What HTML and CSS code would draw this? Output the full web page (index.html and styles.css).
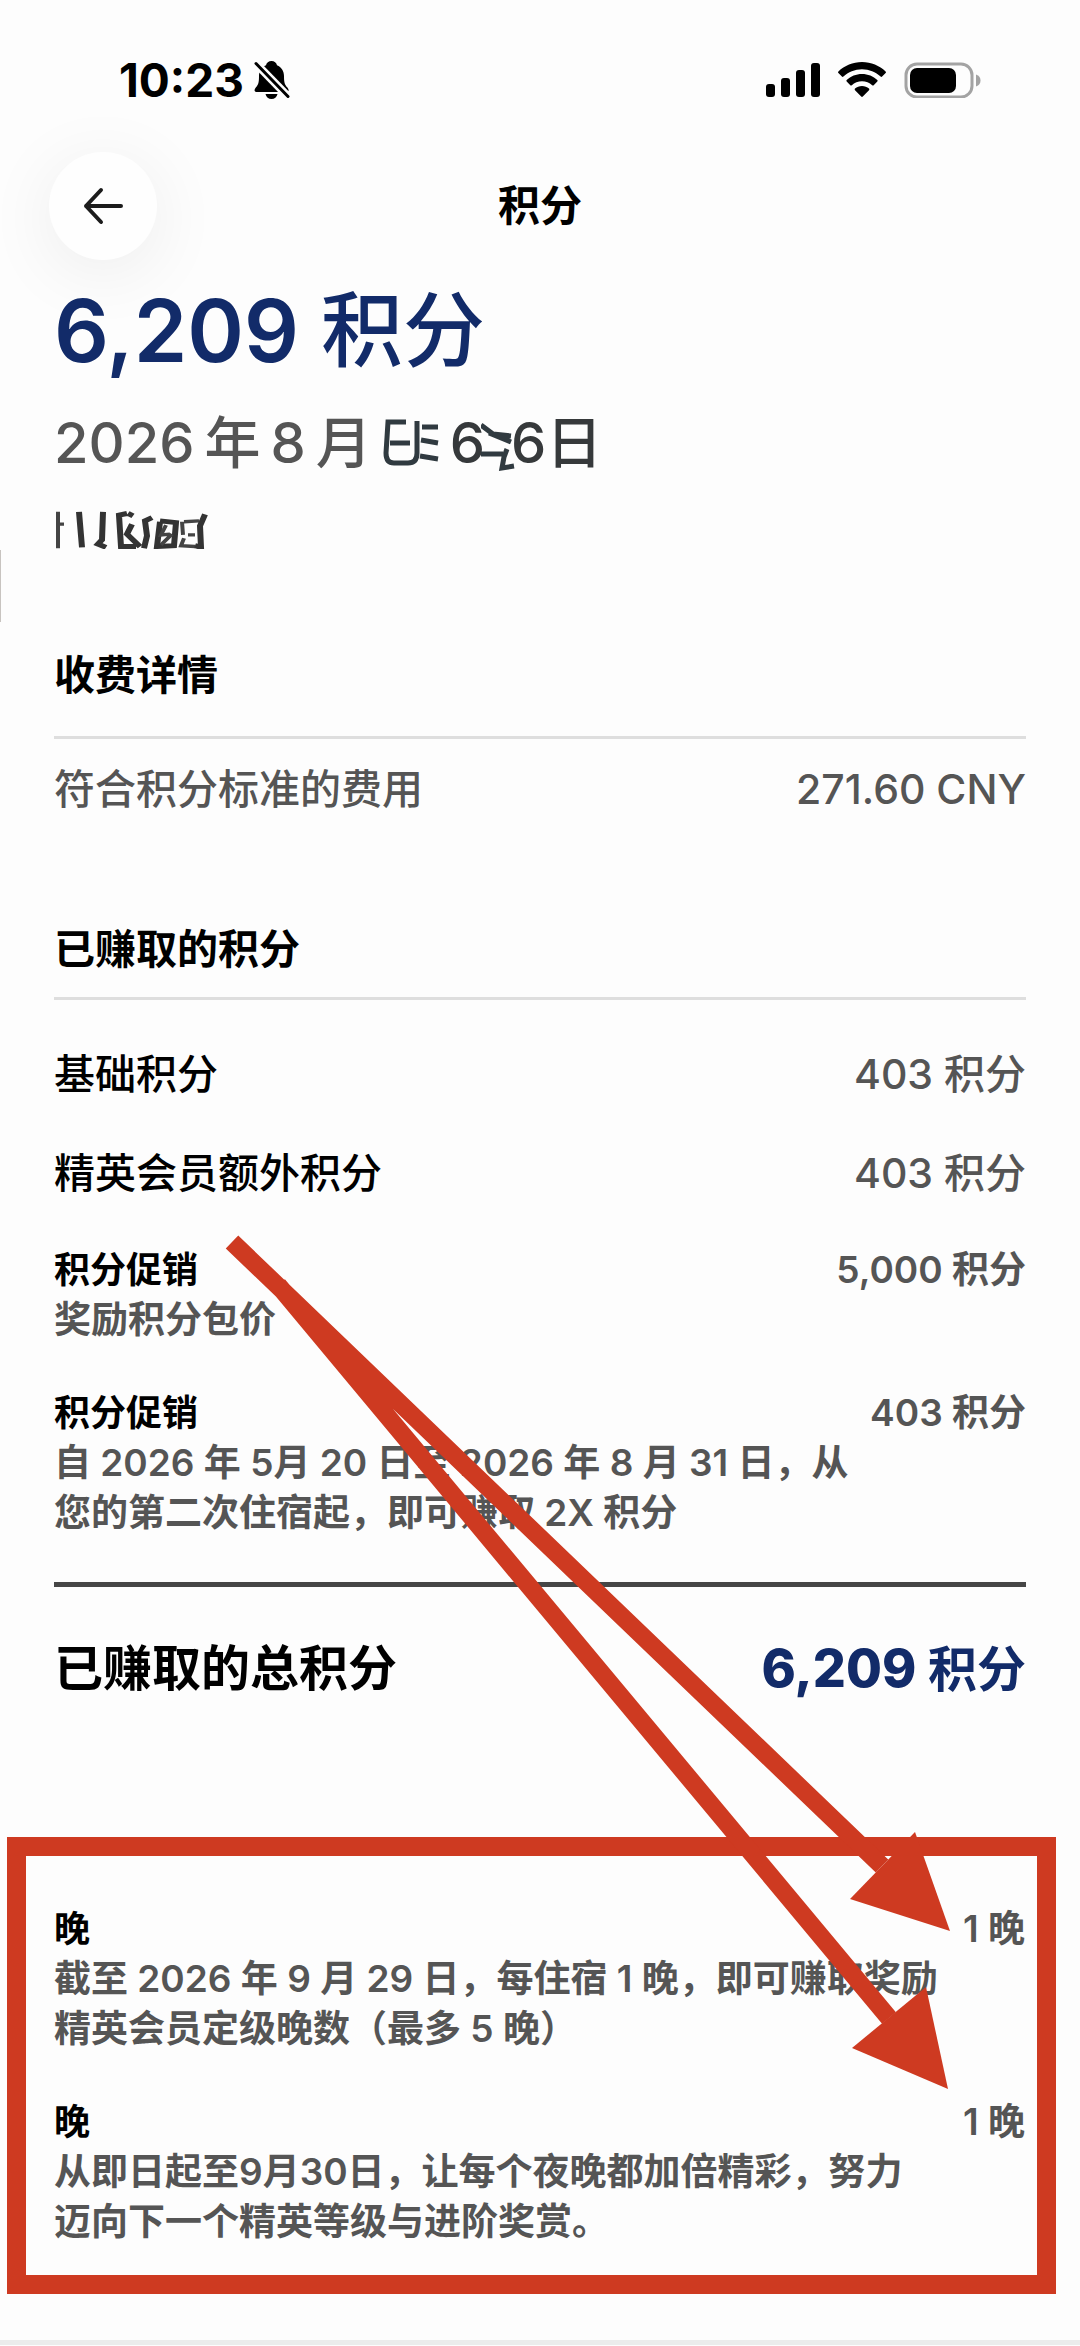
FILE: index.html
```
<!DOCTYPE html>
<html lang="zh-CN">
<head>
  <meta charset="utf-8">
  <meta name="viewport" content="width=device-width, initial-scale=1">
  <title>积分</title>
  <link rel="stylesheet" href="styles.css">
</head>
<body>
  <div class="page">
    <div class="status-bar">
      <div class="status-left">
        <span class="time">10:23</span>
        <svg class="bell" width="36" height="40" viewBox="0 0 36 40">
          <path d="M17.500 1c-2.800 0-5 1.700-5.500 4.200C7.500 7 5 11 5 16c0 6-.5 8.500-3.200 11.500C-.3 30 .3 32 3 32h29c2.800 0 3.500-2 1.400-4.500C30.600 24.500 30 22 30 16c0-5-2.500-9-7-10.800C22.500 2.700 20.300 1 17.500 1z"/>
          <path d="M11.500 34h12c-.6 3-3 5-6 5s-5.400-2-6-5z"/>
          <path class="slash-gap" d="M0 1.500l35 36"/>
          <path class="slash" d="M2 3.500l32 33"/>
        </svg>
      </div>
      <div class="status-right">
        <svg width="54" height="36" viewBox="0 0 54 36">
          <rect x="0" y="22" width="9" height="13" rx="3"/>
          <rect x="15" y="16" width="9" height="19" rx="3"/>
          <rect x="30" y="8" width="9" height="27" rx="3"/>
          <rect x="45" y="1" width="9" height="34" rx="3"/>
        </svg>
        <svg width="48" height="36" viewBox="0 0 48 36">
          <path d="M24 0C14.800 0 6.500 3.600.4 9.400c-.5.500-.5 1.100 0 1.600l3.500 3.600c.4.400 1 .4 1.500 0C10.300 10 16.800 7.200 24 7.200S37.700 10 42.600 14.600c.5.400 1.100.4 1.500 0l3.500-3.600c.5-.5.5-1.100 0-1.600C41.500 3.600 33.200 0 24 0z"/>
          <path d="M24 12c-5.900 0-11.300 2.300-15.300 6-.5.500-.5 1.100 0 1.600l3.600 3.600c.4.400 1 .4 1.500 0 2.700-2.400 6.300-3.900 10.200-3.900s7.500 1.500 10.200 3.900c.5.400 1.100.4 1.500 0l3.600-3.600c.5-.5.5-1.100 0-1.600-4-3.700-9.400-6-15.300-6z"/>
          <path d="M24 24c-2.700 0-5.100 1-7 2.600-.5.500-.5 1.100 0 1.600l6.200 6.400c.5.500 1.100.5 1.600 0l6.200-6.400c.5-.5.5-1.100 0-1.600-1.900-1.600-4.300-2.600-7-2.600z"/>
        </svg>
        <svg width="78" height="36" viewBox="0 0 78 36">
          <rect class="battery-shell" x="2" y="2" width="66" height="33" rx="11"/>
          <rect x="6" y="6" width="46" height="25" rx="7"/>
          <path class="battery-cap" d="M72 12.500c3 1 4.500 3.200 4.500 6s-1.500 5-4.500 6z"/>
        </svg>
      </div>
    </div>

    <header class="header">
      <button class="back" type="button" aria-label="返回">
        <svg width="40" height="38" viewBox="0 0 40 38">
          <path d="M38 19H3M18 3L3 19l15 16"/>
        </svg>
      </button>
      <h1 class="title">积分</h1>
    </header>

    <main>
      <section class="summary">
        <p class="points"><span class="points-number">6,209</span><span>积分</span></p>
        <p class="date">
          <span>2026</span><span>年</span><span>8</span><span>月</span>
          <svg class="scrawl" width="58" height="60" viewBox="8 0 58 60">
            <path d="M32 9H14L12 40q0 10 8 10h14q9 0 9-10V8M16 30h20M48 14h16M47 27l17 3M46 43l18 3"/>
          </svg>
          <span class="inked">6</span>
          <svg class="scrawl link" width="34" height="60" viewBox="0 0 34 60">
            <path d="M0 12l12 9 18 2M8 20l22 9M0 41h22M26 36l-3 8-2 11 12-2"/>
          </svg>
          <span class="inked">6日</span>
        </p>
        <!-- hidden hotel name -->
        <svg class="scribble" width="154" height="38" viewBox="0 0 154 46" preserveAspectRatio="none">
          <path d="M4 1v44M5 16h5"/>
          <path class="thick" d="M25 1l3 43M49 1l-1 34-4 5 8 4"/>
          <path class="thick" d="M73 3l-8 2 2 38h15M74 3l5 3M78 16l-5 12 13 15"/>
          <path class="thick" d="M98 8l-7 4 2 18-3 15M106 12l16 2-2 28-17 1 3-30"/>
          <path d="M112 17l-5 12 9-1M118 28l-11 13M130 13l15-1M128 13l1 16M130 33l-3 9 14 1M134 29h7"/>
          <path class="thick" d="M151 4l-5 14 1 26-6-2"/>
        </svg>
      </section>

      <section class="card charges">
        <h2>收费详情</h2>
        <div class="row muted"><span>符合积分标准的费用</span><span class="value">271.60 CNY</span></div>
      </section>

      <section class="card earned">
        <h2>已赚取的积分</h2>
        <div class="row"><span>基础积分</span><span class="value">403 积分</span></div>
        <div class="row"><span>精英会员额外积分</span><span class="value">403 积分</span></div>
        <div class="item">
          <div class="item-head"><h3>积分促销</h3><span class="value">5,000 积分</span></div>
          <p>奖励积分包价</p>
        </div>
        <div class="item">
          <div class="item-head"><h3>积分促销</h3><span class="value">403 积分</span></div>
          <p>自 2026 年 5月 20 日至 2026 年 8 月 31 日，从<br>您的第二次住宿起，即可赚取 2X 积分</p>
        </div>
        <div class="total"><span>已赚取的总积分</span><span class="total-value"><span class="total-number">6,209</span> 积分</span></div>
      </section>

      <section class="nights">
        <div class="item">
          <div class="item-head"><h3>晚</h3><span class="value">1 晚</span></div>
          <p>截至 2026 年 9 月 29 日，每住宿 1 晚，即可赚取奖励<br>精英会员定级晚数（最多 5 晚）</p>
        </div>
        <div class="item">
          <div class="item-head"><h3>晚</h3><span class="value">1 晚</span></div>
          <p>从即日起至9月30日，让每个夜晚都加倍精彩，努力<br>迈向下一个精英等级与进阶奖赏。</p>
        </div>
      </section>
    </main>
    <div class="bottom-edge"></div>

    <!-- arrows over the page -->
    <svg class="arrows" viewBox="0 0 1080 2346">
      <path class="shaft" d="M232 1242L882 1866M278 1285L889 2018"/>
      <path d="M950 1931L915 1832 850 1899z"/>
      <path d="M948 2089L926 1987 852 2048z"/>
    </svg>
    <span class="side-tab"></span>
  </div>
</body>
</html>
```

FILE: styles.css
```
* {
  box-sizing: border-box;
}
body {
  margin: 0;
  background: #fdfdfd;
  color: #000;
  font-family: Inter, "Noto Sans CJK SC", sans-serif;
  font-size: 41px;
  line-height: 50px;
}
h1, h2, h3, p {
  margin: 0;
}
svg {
  display: block;
  flex: none;
}
.page {
  position: relative;
  overflow: hidden;
}

/* status bar */
.status-bar {
  display: flex;
  justify-content: space-between;
  padding: 54px 98px 46px 119px;
  line-height: 52px;
}
.status-left, .status-right {
  display: flex;
  align-items: center;
}
.status-left {
  gap: 10px;
}
.status-right {
  gap: 18px;
}
.time {
  font-size: 46px;
  font-weight: 700;
}
.slash {
  fill: none;
  stroke: #000;
  stroke-width: 3;
  stroke-linecap: round;
}
.slash-gap {
  fill: none;
  stroke: #fdfdfd;
  stroke-width: 8;
}
.battery-shell {
  fill: none;
  stroke: #a3a3a3;
  stroke-width: 3;
}
.battery-cap {
  fill: #a3a3a3;
}

/* header */
.header {
  display: grid;
  grid-template-columns: 108px 1fr 108px;
  align-items: center;
  padding: 0 49px;
}
.back {
  display: flex;
  align-items: center;
  justify-content: center;
  width: 108px;
  height: 108px;
  padding: 0;
  border: 0;
  border-radius: 50%;
  background: #fefefe;
  box-shadow: 0 12px 72px rgba(0, 0, 0, 0.07);
}
.back path {
  fill: none;
  stroke: #1c1c1c;
  stroke-width: 4;
  stroke-linecap: round;
  stroke-linejoin: round;
}
.title {
  font-size: 42px;
  font-weight: 700;
  text-align: center;
}

/* summary */
.summary {
  padding: 27px 54px 0;
}
.points {
  display: flex;
  gap: 22px;
  color: #122b69;
  font-size: 82px;
  font-weight: 500;
  line-height: 88px;
}
.points-number {
  font-size: 86px;
  font-weight: 600;
}
.date {
  display: flex;
  gap: 10px;
  margin-top: 38px;
  color: #555;
  font-size: 56px;
  font-weight: 500;
  line-height: 60px;
}
.inked {
  color: #36393b;
}
.scrawl {
  fill: none;
  stroke: #303a40;
  stroke-width: 5;
}
.link {
  margin: 0 -14px;
}
.scribble {
  margin-top: 38px;
  fill: none;
  stroke: #444;
  stroke-width: 4;
}
.thick {
  stroke: #333;
  stroke-width: 6;
}

/* sections */
.card {
  padding: 0 54px;
}
.charges {
  margin-top: 101px;
}
.earned {
  margin-top: 110px;
}
h2 {
  padding-bottom: 23px;
  border-bottom: 3px solid #dedede;
  font-size: 41px;
  font-weight: 700;
}
.charges h2 {
  padding-bottom: 36px;
}
.row, .item-head, .total {
  display: flex;
  justify-content: space-between;
}
.row {
  margin-top: 49px;
  font-weight: 500;
}
.charges .row {
  margin-top: 25px;
}
.muted, .value, .item p {
  color: #555;
}
.value {
  font-weight: 500;
}
.item {
  margin-top: 43px;
  font-size: 37px;
}
.row + .item {
  margin-top: 47px;
}
.item h3 {
  font-size: 36px;
  font-weight: 700;
}
.item p, .item .value {
  font-weight: 600;
}
.total {
  margin-top: 44px;
  padding-top: 52px;
  border-top: 5px solid #464646;
  font-size: 49px;
  font-weight: 700;
  line-height: 60px;
}
.total-value {
  color: #122b69;
}
.total-number {
  font-size: 52px;
  font-weight: 800;
}

/* highlighted nights */
.nights {
  margin: 137px 24px 0 7px;
  padding: 5px 12px 28px 28px;
  border: 19px solid #ce3a21;
}
.bottom-edge {
  height: 5px;
  margin-top: 46px;
  background: #ececec;
}

.arrows {
  position: absolute;
  top: 0;
  left: 0;
  width: 100%;
  fill: #ce3a21;
  pointer-events: none;
}
.shaft {
  fill: none;
  stroke: #ce3a21;
  stroke-width: 18;
}
.side-tab {
  position: absolute;
  top: 550px;
  left: 0;
  width: 1px;
  height: 72px;
  background: #c8c4c0;
}
```
